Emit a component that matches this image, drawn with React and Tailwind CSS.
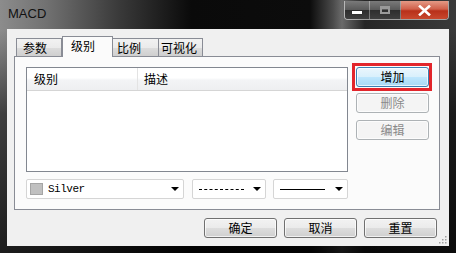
import React from 'react';

const tabs = [
  { label: '参数', cls: 'w-[46px] pl-[6px]' },
  { label: '级别', cls: 'w-[51px] pl-[8px]', active: true },
  { label: '比例', cls: 'w-[47px] pl-[4px]' },
  { label: '可视化', cls: 'w-[45px] pl-[2px]' },
];

const btnStyles = {
  normal:
    'border-[#707070] text-black bg-[linear-gradient(180deg,#f2f2f2_0%,#ebebeb_48%,#dddddd_52%,#cfcfcf_100%)]',
  hot: 'border-[#3c7fb1] text-black bg-[linear-gradient(180deg,#eaf6fd_0%,#d9f0fc_48%,#bee6fd_52%,#a7d9f5_100%)]',
  disabled: 'border-[#adb2b5] text-[#8a8a8a] bg-[#f4f4f4]',
};

const Btn = ({ children, variant = 'normal', className = '' }) => (
  <div
    className={`w-[73px] h-[20px] rounded-[3px] border flex items-center justify-center text-[12px] leading-none shadow-[inset_0_0_0_1px_rgba(255,255,255,0.7)] ${btnStyles[variant]} ${className}`}
  >
    {children}
  </div>
);

const Arrow = () => (
  <div className="w-0 h-0 border-l-[4px] border-r-[4px] border-t-[4px] border-l-transparent border-r-transparent border-t-black" />
);

const Combo = ({ className = '', children }) => (
  <div
    className={`h-[20px] bg-white border border-[#d5d5d5] rounded-[2px] flex items-center pr-[4px] ${className}`}
  >
    <div className="flex-1 flex items-center min-w-0">{children}</div>
    <Arrow />
  </div>
);

const App = () => {
  return (
    <div className="w-[456px] h-[253px] flex flex-col overflow-hidden font-['Noto_Sans_CJK_SC',sans-serif] bg-[linear-gradient(180deg,rgba(0,0,0,0)_0%,rgba(0,0,0,0)_12%,rgba(0,0,0,0.55)_45%,rgba(0,0,0,0.8)_100%),linear-gradient(90deg,#8c8c8c_0%,#727272_10%,#3a3a3a_26%,#0a0a0a_42%,#0c0c0c_68%,#4a4a4a_73%,#6a6a6a_75%,#262626_80%,#3a3a3a_100%)]">
      {/* title bar */}
      <div className="h-[29px] flex items-start shrink-0">
        <div className="pl-[8px] pt-[6px] text-[13px] leading-[16px] text-[#111] font-['Liberation_Sans',sans-serif]">
          MACD
        </div>
        <div className="ml-auto mr-[7px] mt-[1px] flex h-[19px] rounded-b-[4px] border border-t-0 border-[rgba(255,255,255,0.55)] overflow-hidden">
          <div className="w-[25px] flex items-end justify-center pb-[5px] bg-[linear-gradient(180deg,#7a7a7a_0%,#5a5a5a_48%,#2e2e2e_52%,#3e3e3e_100%)] border-r border-[rgba(255,255,255,0.35)]">
            <div className="w-[10px] h-[3px] bg-white shadow-[0_0_1px_#000]" />
          </div>
          <div className="w-[31px] flex items-center justify-center bg-[linear-gradient(180deg,#7a7a7a_0%,#5a5a5a_48%,#2e2e2e_52%,#3e3e3e_100%)] border-r border-[rgba(255,255,255,0.35)]">
            <div className="w-[10px] h-[8px] border-2 border-[#9a9a9a] border-t-[3px]" />
          </div>
          <div className="w-[47px] flex items-center justify-center bg-[linear-gradient(180deg,#e49a86_0%,#d0604a_45%,#b8301a_55%,#c8482e_100%)]">
            <svg width="13" height="11" viewBox="0 0 13 11">
              <path d="M2 1.5 L11 9.5 M11 1.5 L2 9.5" stroke="#fff" strokeWidth="2.6" strokeLinecap="square" />
            </svg>
          </div>
        </div>
      </div>

      {/* client area */}
      <div className="mx-[7px] h-[217px] bg-[#f0f0f0] flex flex-col relative">
        {/* tab strip */}
        <div className="flex items-end h-[20px] mt-[7px] ml-[9px]">
          {tabs.map((t) =>
            t.active ? (
              <div
                key={t.label}
                className={`${t.cls} h-[21px] -mb-px relative z-10 bg-[#fbfbfb] border border-b-0 border-[#898c95] text-[12px] leading-none flex items-start pt-[3px] text-black`}
              >
                {t.label}
              </div>
            ) : (
              <div
                key={t.label}
                className={`${t.cls} h-[18px] -ml-px first:ml-0 bg-[linear-gradient(180deg,#f2f2f2_0%,#ebebeb_50%,#dddddd_50%,#cfcfcf_100%)] border border-b-0 border-[#898c95] text-[12px] leading-none flex items-center text-black`}
              >
                {t.label}
              </div>
            )
          )}
        </div>

        {/* tab panel */}
        <div className="ml-[7px] w-[426px] h-[154px] bg-[#fbfbfb] border border-[#898c95] flex">
          <div className="pl-[11px] pt-[10px] flex flex-col">
            {/* list view */}
            <div className="w-[322px] h-[105px] bg-white border border-[#828790] flex flex-col">
              <div className="h-[23px] flex bg-[linear-gradient(180deg,#ffffff_0%,#ffffff_45%,#f3f4f6_55%,#eeeff1_100%)] border-b border-[#d5d5d5] text-[12px] leading-none text-black">
                <div className="w-[111px] pl-[7px] flex items-center border-r border-[#e3e3e3]">级别</div>
                <div className="pl-[6px] flex items-center">描述</div>
              </div>
            </div>
            {/* style combos */}
            <div className="flex mt-[7px]">
              <Combo className="w-[158px]">
                <div className="ml-[3px] w-[13px] h-[12px] bg-[#c0c0c0] border border-[#a5a5a5]" />
                <span className="ml-[5px] text-[11px] tracking-[-0.5px] leading-none font-['Liberation_Mono',monospace] text-black">
                  Silver
                </span>
              </Combo>
              <Combo className="w-[74px] ml-[8px]">
                <div className="ml-[6px] w-[45px] border-t border-dashed border-black" />
              </Combo>
              <Combo className="w-[75px] ml-[7px]">
                <div className="ml-[6px] w-[45px] border-t border-black" />
              </Combo>
            </div>
          </div>

          {/* right buttons */}
          <div className="ml-[8px] pt-[10px] flex flex-col">
            <div className="relative">
              <Btn variant="hot" className="h-[19px]">增加</Btn>
              <div className="absolute left-[-4px] top-[-4px] w-[80px] h-[28px] border-[3px] border-[#e2252b] pointer-events-none" />
            </div>
            <Btn variant="disabled" className="mt-[6px] h-[19px]">删除</Btn>
            <Btn variant="disabled" className="mt-[7px] h-[19px]">编辑</Btn>
          </div>
        </div>

        {/* bottom buttons */}
        <div className="flex mt-[8px] ml-[197px] gap-[7px]">
          <Btn>确定</Btn>
          <Btn>取消</Btn>
          <Btn>重置</Btn>
        </div>

        {/* size grip */}
        <svg className="absolute right-[2px] bottom-[2px]" width="10" height="10" viewBox="0 0 10 10">
          {[
            [8, 0],
            [8, 3],
            [5, 3],
            [8, 6],
            [5, 6],
            [2, 6],
          ].map(([x, y]) => (
            <rect key={`${x}-${y}`} x={x} y={y + 2} width="1.5" height="1.5" fill="#a0a0a0" />
          ))}
        </svg>
      </div>
    </div>
  );
};

export default App;
